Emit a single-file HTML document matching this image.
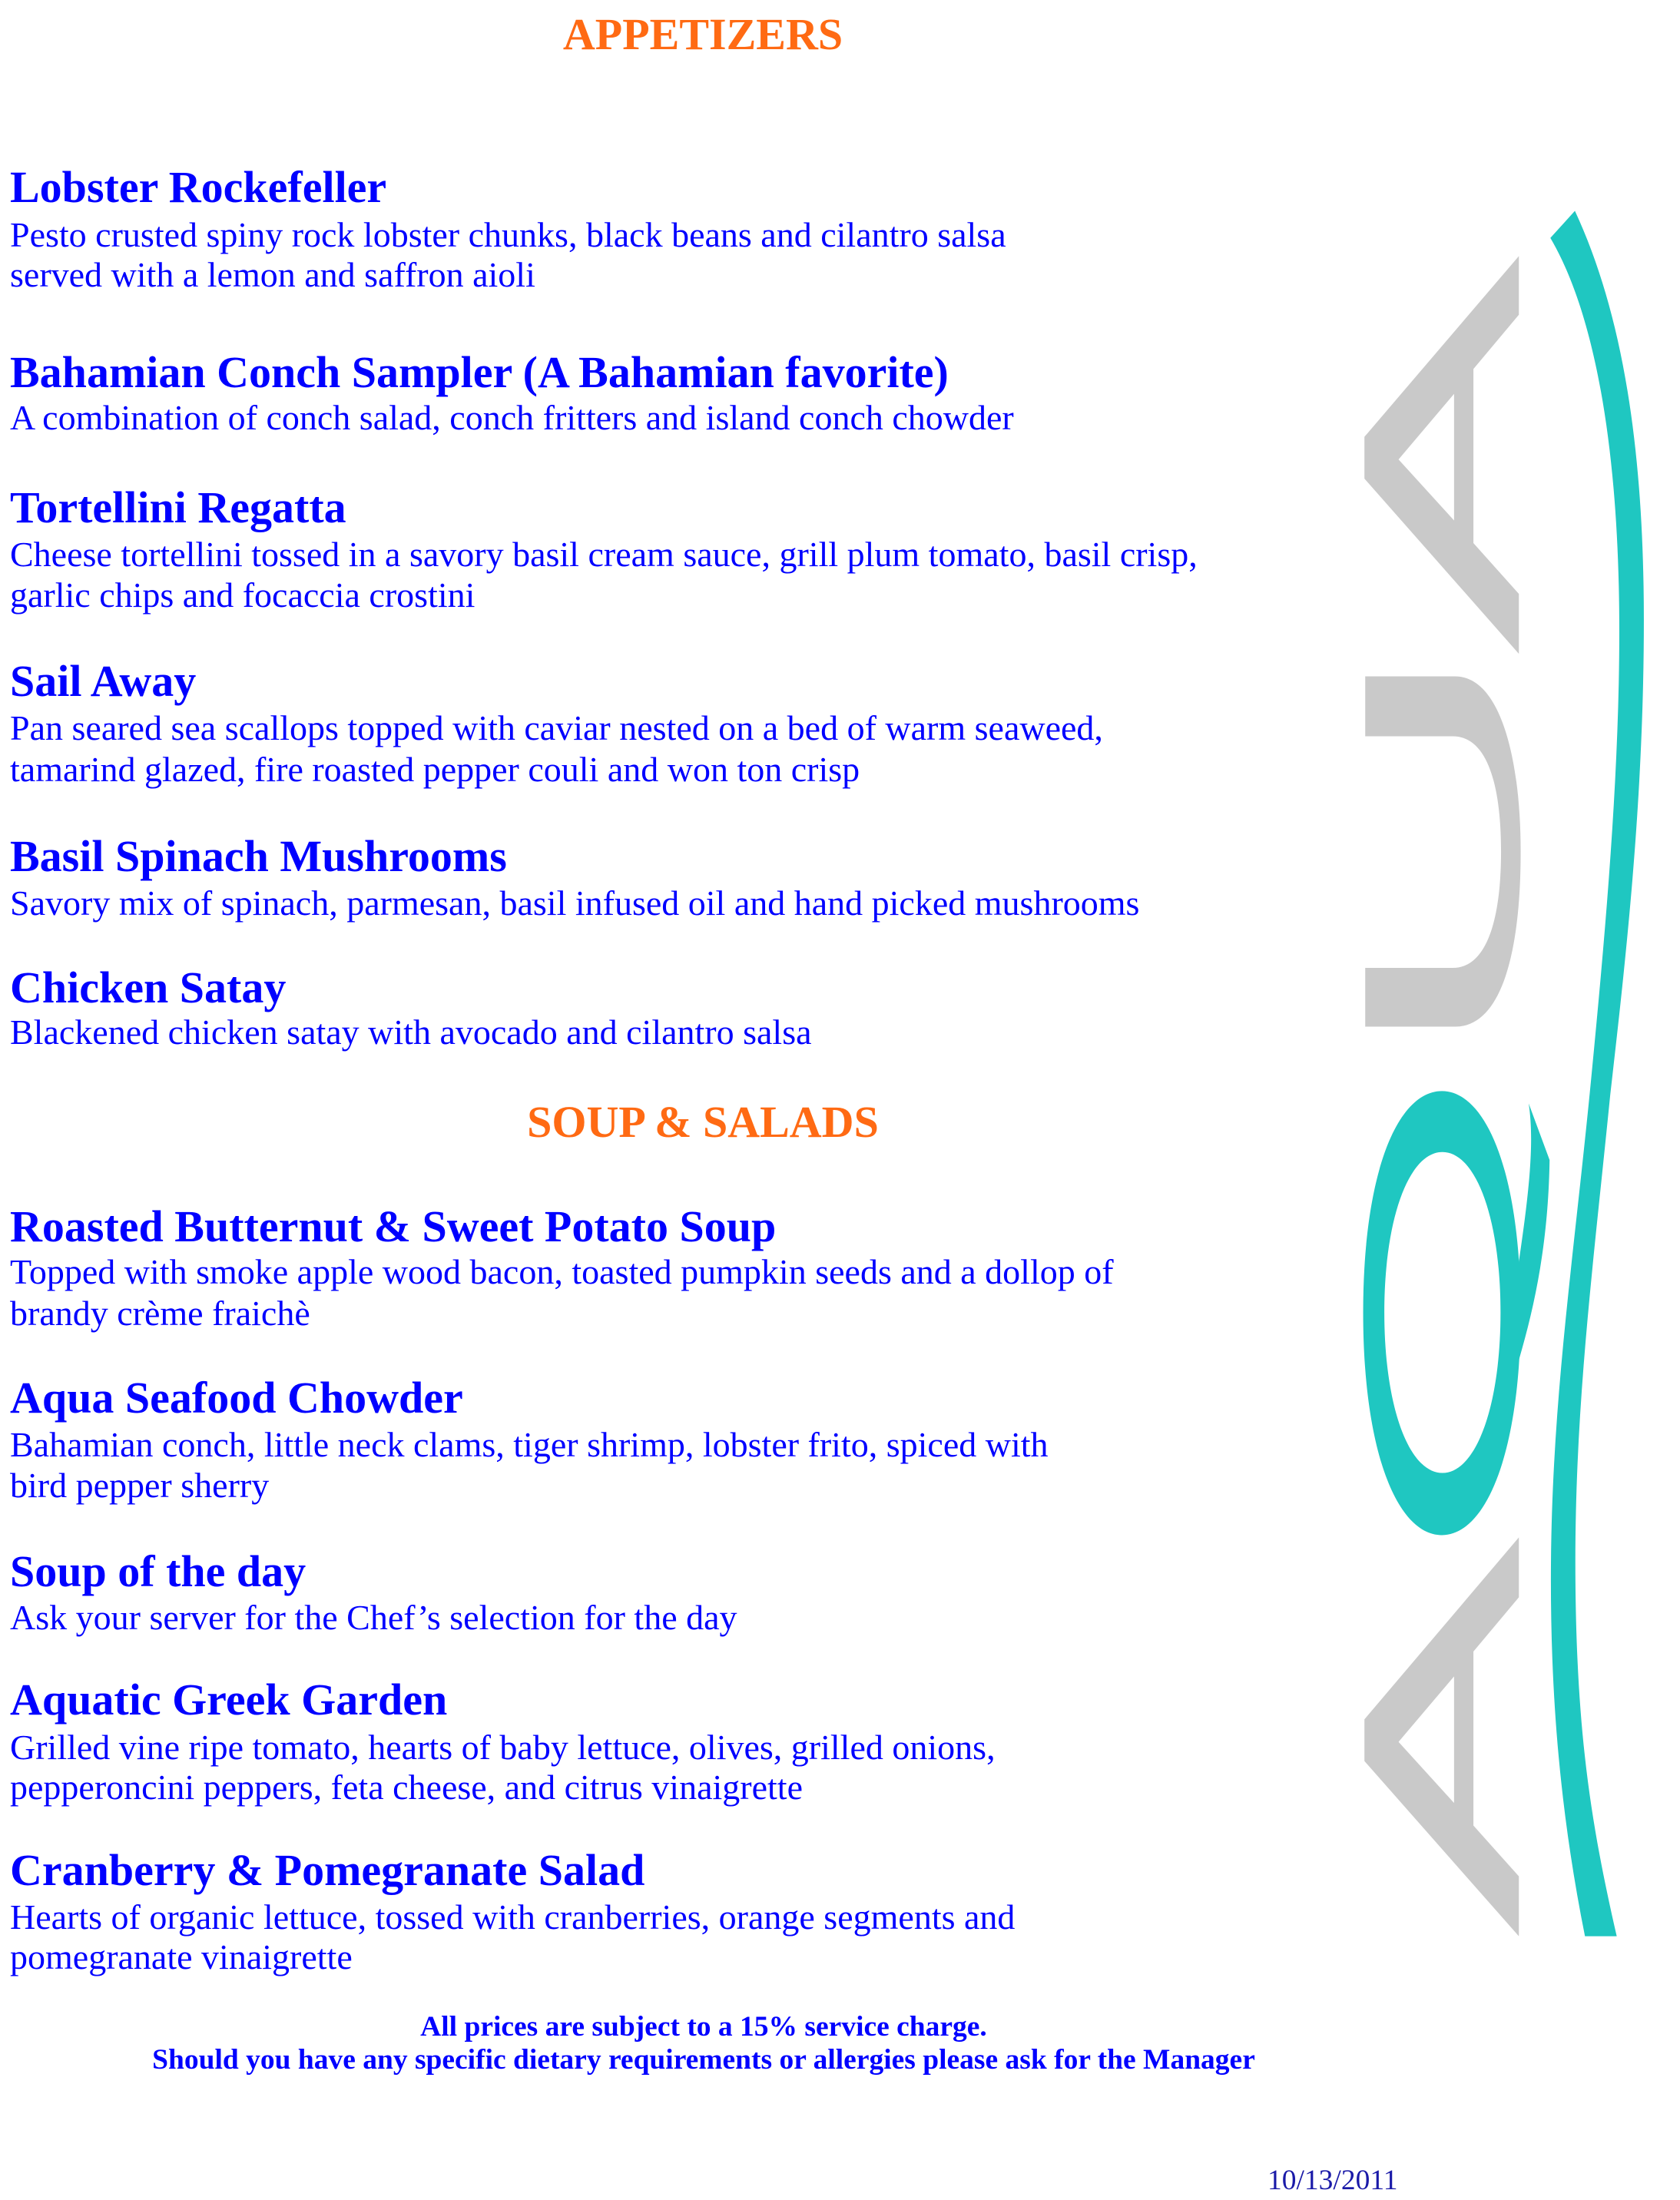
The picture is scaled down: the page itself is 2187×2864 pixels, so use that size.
<!DOCTYPE html>
<html><head><meta charset="utf-8"><style>
html,body{margin:0;padding:0;background:#fff;}
body{width:2187px;height:2864px;position:relative;overflow:hidden;font-family:"Liberation Serif","Times New Roman",serif;}
.t{position:absolute;white-space:nowrap;line-height:1;}
.h{font-size:58px;font-weight:bold;color:#0000ff;left:13px;}
.d{font-size:46px;color:#0000ff;left:13px;}
.s{font-size:58px;font-weight:bold;color:#ff6a13;left:0;width:1830px;text-align:center;}
.f{font-size:37.5px;font-weight:bold;color:#0000ff;left:0;width:1832px;text-align:center;}
</style></head><body>
<div class="t s" style="top:16px">APPETIZERS</div>

<div class="t h" style="top:215px">Lobster Rockefeller</div>
<div class="t d" style="top:283px">Pesto crusted spiny rock lobster chunks, black beans and cilantro salsa</div>
<div class="t d" style="top:335px">served with a lemon and saffron aioli</div>

<div class="t h" style="top:456px">Bahamian Conch Sampler (A Bahamian favorite)</div>
<div class="t d" style="top:521px">A combination of conch salad, conch fritters and island conch chowder</div>

<div class="t h" style="top:632px">Tortellini Regatta</div>
<div class="t d" style="top:699px">Cheese tortellini tossed in a savory basil cream sauce, grill plum tomato, basil crisp,</div>
<div class="t d" style="top:752px">garlic chips and focaccia crostini</div>

<div class="t h" style="top:858px">Sail Away</div>
<div class="t d" style="top:925px">Pan seared sea scallops topped with caviar nested on a bed of warm seaweed,</div>
<div class="t d" style="top:979px">tamarind glazed, fire roasted pepper couli and won ton crisp</div>

<div class="t h" style="top:1086px">Basil Spinach Mushrooms</div>
<div class="t d" style="top:1153px">Savory mix of spinach, parmesan, basil infused oil and hand picked mushrooms</div>

<div class="t h" style="top:1257px">Chicken Satay</div>
<div class="t d" style="top:1321px">Blackened chicken satay with avocado and cilantro salsa</div>

<div class="t s" style="top:1432px">SOUP &amp; SALADS</div>

<div class="t h" style="top:1568px">Roasted Butternut &amp; Sweet Potato Soup</div>
<div class="t d" style="top:1633px">Topped with smoke apple wood bacon, toasted pumpkin seeds and a dollop of</div>
<div class="t d" style="top:1687px">brandy crème fraichè</div>

<div class="t h" style="top:1791px">Aqua Seafood Chowder</div>
<div class="t d" style="top:1858px">Bahamian conch, little neck clams, tiger shrimp, lobster frito, spiced with</div>
<div class="t d" style="top:1911px">bird pepper sherry</div>

<div class="t h" style="top:2017px">Soup of the day</div>
<div class="t d" style="top:2083px">Ask your server for the Chef’s selection for the day</div>

<div class="t h" style="top:2184px">Aquatic Greek Garden</div>
<div class="t d" style="top:2252px">Grilled vine ripe tomato, hearts of baby lettuce, olives, grilled onions,</div>
<div class="t d" style="top:2304px">pepperoncini peppers, feta cheese, and citrus vinaigrette</div>

<div class="t h" style="top:2406px">Cranberry &amp; Pomegranate Salad</div>
<div class="t d" style="top:2473px">Hearts of organic lettuce, tossed with cranberries, orange segments and</div>
<div class="t d" style="top:2525px">pomegranate vinaigrette</div>

<div class="t f" style="top:2620px">All prices are subject to a 15% service charge.</div>
<div class="t f" style="top:2663px">Should you have any specific dietary requirements or allergies please ask for the Manager</div>

<div class="t" style="top:2820px;left:1650px;font-size:37.5px;color:#1a1aa8;">10/13/2011</div>

<svg style="position:absolute;left:1750px;top:248px" width="437" height="2280" viewBox="0 0 1300 1550" preserveAspectRatio="none">
<g fill="#c9c9c9" fill-rule="evenodd">
<path d="M78,218 L676,58 L676,110 L500,158 L500,312 L676,357 L676,410 L78,255 Z M210,238 L425,180 L425,292 Z"/>
<path d="M81,430 H430 C600,430 683,500 683,585 C683,680 600,740 430,740 H81 V688 H420 C560,688 607,640 607,585 C607,530 560,483 420,483 H81 Z"/>
<path d="M78,1353 L676,1192 L676,1245 L500,1293 L500,1447 L676,1492 L676,1545 L78,1390 Z M210,1373 L425,1315 L425,1427 Z"/>
</g>
<g fill="#1fc7c1" fill-rule="evenodd">
<path d="M378,797 C550,797 683,870 683,993 C683,1116 550,1190 378,1190 C205,1190 73,1116 73,993 C73,870 205,797 378,797 Z M380,851 C250,851 155,910 155,993 C155,1076 250,1135 380,1135 C510,1135 605,1076 605,993 C605,910 510,851 380,851 Z"/>
<path d="M714,808 L795,858 C790,930 740,985 676,1035 L676,948 C720,880 735,840 714,808 Z"/>
<path d="M798,42 L893,18 C1080,110 1160,230 1160,380 C1160,540 1090,680 1030,800 C960,960 890,1080 895,1230 C900,1370 960,1450 1055,1545 L932,1545 C840,1440 800,1340 800,1230 C800,1080 880,960 950,800 C1010,660 1065,520 1065,390 C1065,220 960,105 798,42 Z"/>
</g>
</svg>
</body></html>
